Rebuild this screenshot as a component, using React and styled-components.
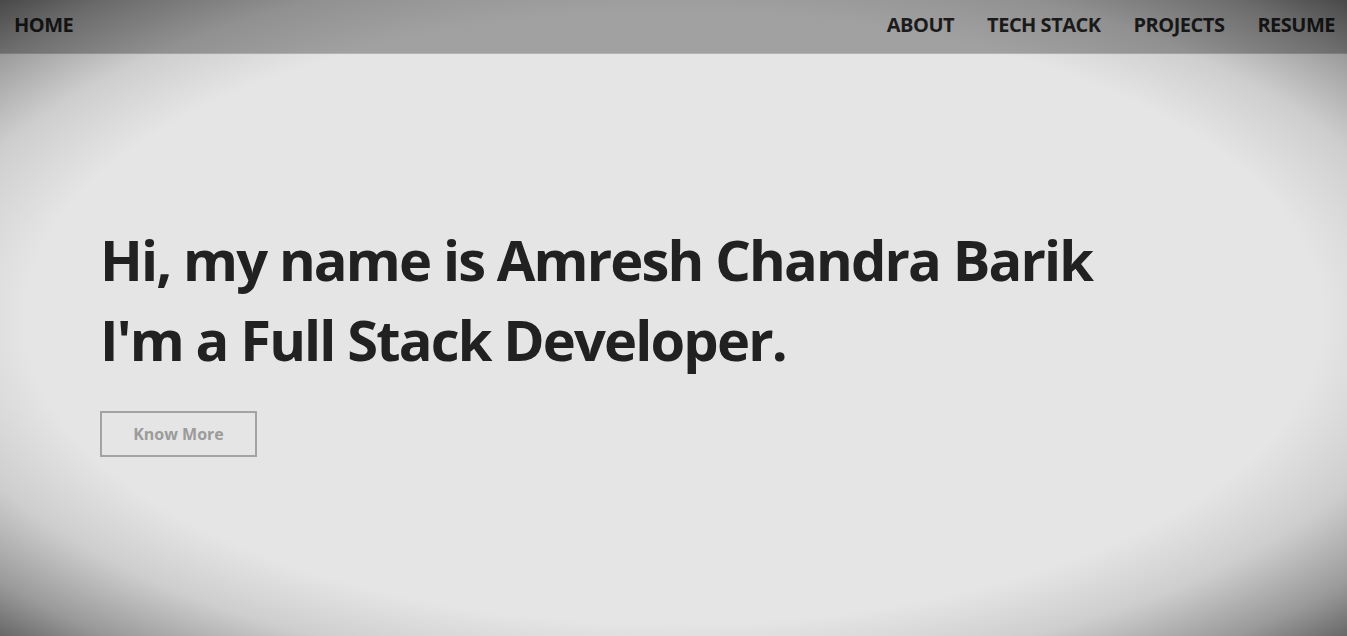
import React from "react";
import styled, { createGlobalStyle } from "styled-components";

const GlobalStyle = createGlobalStyle`
  * {
    box-sizing: border-box;
  }
  html,
  body {
    margin: 0;
    padding: 0;
    height: 100%;
    overflow: hidden;
  }
  body {
    font-family: "Open Sans", "Noto Sans", sans-serif;
    background-color: #e5e5e5;
  }
`;

const links = ["ABOUT", "TECH STACK", "PROJECTS", "RESUME"];

const App = () => {
  return (
    <Page>
      <GlobalStyle />
      <Navbar>
        <NavLink>HOME</NavLink>
        <NavList>
          {links.map((link) => (
            <NavLink key={link}>{link}</NavLink>
          ))}
        </NavList>
      </Navbar>
      <Hero>
        <Title>
          Hi, my name is Amresh Chandra Barik
          <br />
          I'm a Full Stack Developer.
        </Title>
        <Button>Know More</Button>
      </Hero>
      <Vignette />
    </Page>
  );
};

export default App;

const Page = styled.div`
  position: relative;
  width: 100%;
  height: 100vh;
  display: flex;
  flex-direction: column;
  background-color: #e5e5e5;
`;

const Navbar = styled.nav`
  height: 54px;
  flex-shrink: 0;
  display: flex;
  align-items: center;
  justify-content: space-between;
  padding: 0 12px 5px 14px;
  background-color: #a1a1a1;
  border-bottom: 1px solid #b3b3b3;
`;

const NavList = styled.div`
  display: flex;
  align-items: center;
  gap: 33px;
`;

const NavLink = styled.a`
  font-size: 20px;
  font-weight: 700;
  letter-spacing: -0.5px;
  color: #1c1c1c;
  cursor: pointer;
`;

const Hero = styled.section`
  flex: 1;
  display: flex;
  flex-direction: column;
  justify-content: center;
  align-items: flex-start;
  padding: 0 0 14px 100px;
`;

const Title = styled.h1`
  margin: 0 0 32px 0;
  font-size: 56px;
  line-height: 80px;
  font-weight: 700;
  letter-spacing: -1.85px;
  color: #212121;
`;

const Button = styled.button`
  width: 157px;
  height: 46px;
  background: transparent;
  border: 2px solid #a3a3a3;
  color: #9b9b9b;
  font-family: inherit;
  font-size: 16px;
  font-weight: 700;
  cursor: pointer;
`;

const Vignette = styled.div`
  position: absolute;
  inset: 0;
  pointer-events: none;
  background: radial-gradient(
    ellipse at center,
    rgba(0, 0, 0, 0) 68%,
    rgba(0, 0, 0, 0.1) 80%,
    rgba(0, 0, 0, 0.33) 92%,
    rgba(0, 0, 0, 0.55) 100%
  );
`;
